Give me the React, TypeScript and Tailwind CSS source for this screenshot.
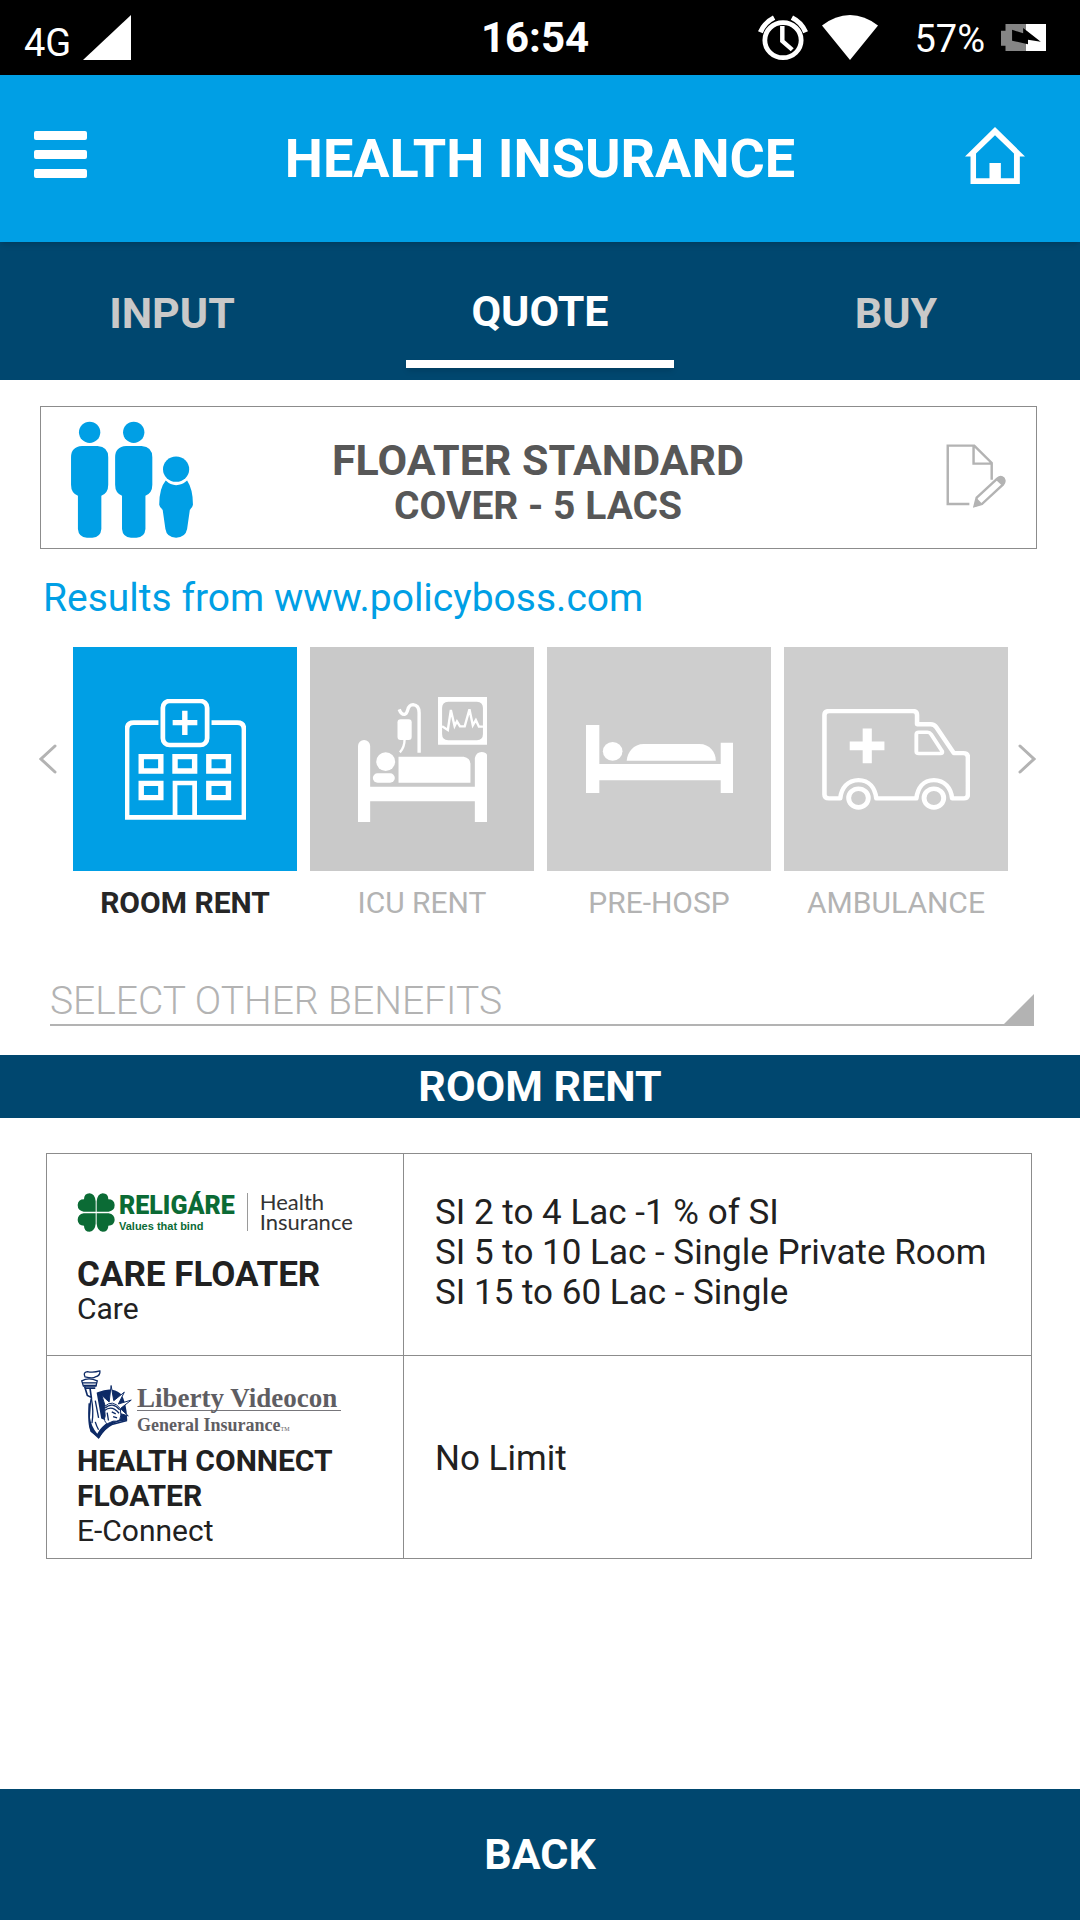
import { useState, type ReactNode } from "react";

type IconProps = { className?: string };

function Signal() {
  return (
    <svg className="h-[45px] w-12" viewBox="0 0 48 45" preserveAspectRatio="none" aria-hidden="true">
      <path d="M0 45L48 0V45Z" fill="#fff" />
    </svg>
  );
}

function Alarm() {
  return (
    <svg className="h-[45px] w-[50px]" viewBox="635 38 146 136" preserveAspectRatio="none" fill="none" stroke="#fff" aria-hidden="true">
      <circle cx="708" cy="114" r="53" strokeWidth="14" />
      <path d="M642 90Q654 60 682 46M774 90Q762 60 734 46" strokeWidth="15" />
      <path d="M706 71V117L735 143" strokeWidth="13" />
    </svg>
  );
}

function Wifi() {
  return (
    <svg className="h-[45px] w-14" viewBox="821 38 164 136" preserveAspectRatio="none" aria-hidden="true">
      <path d="M903 174L821 70Q860 38 903 38Q946 38 985 70Z" fill="#fff" />
    </svg>
  );
}

function Battery() {
  return (
    <svg className="h-[27px] w-[45px]" viewBox="1339 66 130 81" preserveAspectRatio="none" aria-hidden="true">
      <path d="M1352 66H1411V147H1352V131H1339V86H1352Z" fill="#858585" />
      <path d="M1411 66H1469V147H1411Z" fill="#fff" />
      <path d="M1371 83L1403 94V78L1454 119L1417 113V127L1371 116Z" fill="#000" />
    </svg>
  );
}

function Home() {
  return (
    <svg className="h-[57px] w-[60px]" viewBox="1234 380 174 172" preserveAspectRatio="none" aria-hidden="true">
      <path
        fill="#fff"
        fillRule="evenodd"
        d="M1321 380L1408 469H1393V552H1250V469H1234ZM1321 405L1266 460V535H1305V489H1338V535H1376V460Z"
      />
    </svg>
  );
}

function Person() {
  return (
    <g>
      <ellipse cx="260" cy="547" rx="31" ry="32" />
      <path d="M238 588H283Q314 590 314 622V705Q314 730 294 738V838Q292 863 268 864H252Q228 863 226 838V738Q206 730 206 705V622Q206 590 238 588Z" />
    </g>
  );
}

function Family() {
  return (
    <svg className="h-[117px] w-[124px]" viewBox="203 513 360 352" preserveAspectRatio="none" fill="#009fe5" aria-hidden="true">
      <Person />
      <g transform="translate(128 0)">
        <Person />
      </g>
      <ellipse cx="511" cy="658" rx="38" ry="38" />
      <path d="M481 692Q495 706 511 706Q528 706 543 692Q560 718 560 765Q559 773 551 780L543 838Q538 864 511 864Q484 864 480 838L472 780Q463 773 462 765Q462 715 481 692Z" />
    </svg>
  );
}

function EditPage() {
  return (
    <svg className="h-16 w-[60px]" viewBox="1183 583 172 192" preserveAspectRatio="none" fill="none" stroke="#b3b3b3" strokeWidth="7" aria-hidden="true">
      <path d="M1250 763H1188V588H1264L1314 640V690M1262 588V642H1314" />
      <path d="M1265 769L1271 744L1330 687Q1340 678 1348 686Q1354 695 1346 705L1286 763Z" />
      <path d="M1324 689Q1340 676 1349 684Q1358 695 1345 709ZM1262 773L1270 744L1288 764Z" fill="#b3b3b3" stroke="none" />
    </svg>
  );
}

function Chevron({ className }: IconProps) {
  return (
    <svg className={className} viewBox="0 0 18 30" fill="none" stroke="#b3b3b3" strokeWidth="3" strokeLinecap="round" aria-hidden="true">
      <path d="M16 2L2 15L16 28" />
    </svg>
  );
}

function Hospital() {
  return (
    <svg className="h-[121px] w-[121px]" viewBox="311 207 358 363" preserveAspectRatio="none" fill="none" stroke="#fff" aria-hidden="true">
      <path d="M410 278H337Q317 278 317 298V562H663V298Q663 278 643 278H567" strokeWidth="14" />
      <rect x="423" y="213" width="131" height="132" rx="20" strokeWidth="14" />
      <path d="M488 242V315M452 278H525" strokeWidth="16" />
      <path
        d="M359 380H417V423H359ZM459 380H517V423H459ZM559 380H617V423H559ZM359 460H417V503H359ZM559 460H617V503H559Z"
        strokeWidth="16"
      />
      <path d="M459 557V459H517V557" strokeWidth="14" />
    </svg>
  );
}

function IcuBed() {
  return (
    <svg className="h-[125px] w-[129px]" viewBox="1000 201 382 375" preserveAspectRatio="none" fill="#fff" aria-hidden="true">
      <path d="M1000 576V348a18 18 0 0 1 36 0V470H1346V384q4-18 20-18q12 0 16 8V576H1346V514H1036V576Z" />
      <circle cx="1082" cy="395" r="28" />
      <rect x="1044" y="430" width="65" height="28" rx="14" />
      <path d="M1120 380H1313Q1333 384 1333 402V458H1120Z" />
      <rect x="1117" y="268" width="42" height="62" rx="9" />
      <path fillRule="evenodd" d="M1237 201H1382V344H1237ZM1267 215Q1249 216 1249 234V312Q1249 330 1267 331H1352Q1370 330 1370 312V234Q1370 216 1352 215Z" />
      <g fill="none" stroke="#fff">
        <path d="M1138 328Q1138 352 1124 367" strokeWidth="7" />
        <path d="M1122 238Q1128 254 1138 253C1152 250 1142 224 1163 224Q1181 226 1181 248V368" strokeWidth="10" />
        <path d="M1249 289L1266 300L1275 240L1286 288L1293 274L1302 289H1316L1330 238L1340 286L1349 270L1358 290H1370" strokeWidth="7" />
      </g>
    </svg>
  );
}

function Bed() {
  return (
    <svg className="h-[68px] w-[147px]" viewBox="157 288 419 204" preserveAspectRatio="none" fill="#fff" aria-hidden="true">
      <path d="M157 288H195V405H541V341H576V492H541V454H195V492H157Z" />
      <circle cx="233" cy="367" r="28" />
      <path d="M273 395C275 370 292 345 322 345H480C510 345 527 370 527 395Z" />
    </svg>
  );
}

function Ambulance() {
  return (
    <svg className="h-[101px] w-[148px]" viewBox="830 237 422 304" preserveAspectRatio="none" fill="none" stroke="#fff" strokeWidth="13" strokeLinejoin="round" aria-hidden="true">
      <path d="M882 506H850Q837 506 837 494V255Q837 243 850 243H1090Q1101 243 1101 255V283H1140Q1150 283 1156 292L1206 370H1233Q1246 370 1246 382V494Q1246 506 1235 506H1201C1198 475 1180 451 1149 451C1118 451 1103 475 1099 506H985C981 475 965 451 934 451C903 451 885 475 882 506Z" />
      <path d="M1106 307H1131Q1137 307 1141 313L1173 365Q1174 371 1168 371H1106Q1099 371 1099 365V313Q1099 307 1106 307Z" strokeWidth="11" />
      <circle cx="934" cy="505" r="28" strokeWidth="14" />
      <circle cx="1149" cy="505" r="28" strokeWidth="14" />
      <path d="M959 296V400M909 348H1008" strokeWidth="26" />
    </svg>
  );
}

const leaf = "M201 213H165Q147 210 147 193Q148 176 166 176Q166 158 183 158Q199 160 201 182Z";

function Clover() {
  return (
    <svg className="h-[39px] w-[38px]" viewBox="145 157 114 117" fill="#0b6b35" aria-hidden="true">
      <path d={leaf} />
      <path d={leaf} transform="translate(405 0) scale(-1 1)" />
      <path d={leaf} transform="translate(0 431) scale(1 -1)" />
      <path d={leaf} transform="translate(405 431) scale(-1 -1)" />
    </svg>
  );
}

function ReligareLogo() {
  return (
    <div className="flex h-10 items-center">
      <Clover />
      <div className="ml-1 text-[#0b6b35]">
        <div className="text-[25px] leading-7 font-black">RELIGÁRE</div>
        <div className="font-['Liberation_Sans',sans-serif] text-[11px] leading-3 font-bold">Values that bind</div>
      </div>
      <div className="mx-3 h-[38px] w-px bg-[#9a9a9a]" />
      <div className="font-['Lato',sans-serif] text-[22px] leading-5 text-[#333]">
        Health
        <br />
        Insurance
      </div>
    </div>
  );
}

function Statue() {
  return (
    <svg className="h-[70px] w-[53px] shrink-0" viewBox="150 72 160 212" aria-hidden="true">
      <path d="M205 142Q245 124 272 146Q291 168 293 228Q262 230 240 243Q222 257 208 281L182 262Q174 232 178 180L184 150Z" fill="#0d2a66" />
      <path d="M160 128Q168 150 184 164L180 220Q184 248 202 268Q212 248 236 232L214 222L198 132Z" fill="#fff" />
      <path d="M184 160Q192 200 186 236M196 168L206 220M196 232Q200 246 206 256" fill="none" stroke="#0d2a66" strokeWidth="4" />
      <path d="M178 176Q174 240 184 260L206 280Q222 252 246 240L292 228" fill="none" stroke="#0d2a66" strokeWidth="5" />
      <path d="M165 96Q158 82 172 80Q190 84 210 78Q212 92 196 96Q190 102 165 96Z" fill="#fff" stroke="#0d2a66" strokeWidth="4" />
      <path d="M155 108Q176 96 202 108L198 124H160Z" fill="#fff" stroke="#0d2a66" strokeWidth="4" />
      <path d="M160 122H200M166 130H196M164 126L172 152L184 158L180 130" fill="none" stroke="#0d2a66" strokeWidth="5" />
      <path d="M157 114H200" stroke="#0d2a66" strokeWidth="4" />
      <g fill="#fff" stroke="#0d2a66" strokeWidth="3" strokeLinejoin="round">
        <path d="M226 184L216 152L238 172L244 122L252 168L284 142L266 178L305 166L272 192L296 214L268 206Z" />
        <path d="M224 186Q248 162 272 192Q276 214 270 226Q262 232 250 230L232 238Q220 230 226 214Z" />
      </g>
      <path d="M226 190Q248 170 270 196M224 198Q246 180 268 206M246 202L258 208M250 216L262 220M232 204L236 228" fill="none" stroke="#0d2a66" strokeWidth="4" />
    </svg>
  );
}

function LibertyLogo() {
  return (
    <div className="flex items-end pl-[3px] font-['Liberation_Serif',serif] font-bold text-[#5f5e63]">
      <Statue />
      <div className="pl-1">
        <div className="border-b border-[#77767b] pr-1 text-[27px] leading-6">Liberty Videocon</div>
        <div className="pt-1 text-[18px] leading-5">
          General Insurance<span className="text-[6px] font-normal">TM</span>
        </div>
      </div>
    </div>
  );
}

const tabs = ["INPUT", "QUOTE", "BUY"];

const benefits: { label: string; icon: ReactNode; tone: string }[] = [
  { label: "ROOM RENT", icon: <Hospital />, tone: "bg-[#c9c9c9]" },
  { label: "ICU RENT", icon: <IcuBed />, tone: "bg-[#c9c9c9]" },
  { label: "PRE-HOSP", icon: <Bed />, tone: "bg-[#cecece]" },
  { label: "AMBULANCE", icon: <Ambulance />, tone: "bg-[#cecece]" },
];

export default function App() {
  const [tab, setTab] = useState("QUOTE");
  const [benefit, setBenefit] = useState("ROOM RENT");

  return (
    <div className="flex min-h-screen flex-col bg-white font-['Roboto',sans-serif] text-[#212121]">
      <div className="grid h-[75px] grid-cols-[1fr_auto_1fr] items-center bg-black pr-[34px] pl-6 text-[38px] text-white">
        <div className="flex items-center gap-3">
          <span className="pt-3">4G</span>
          <Signal />
        </div>
        <span className="text-[42px] font-bold">16:54</span>
        <div className="flex items-center justify-end">
          <Alarm />
          <span className="ml-3.5">
            <Wifi />
          </span>
          <span className="mr-4 ml-9 pt-1">57%</span>
          <Battery />
        </div>
      </div>

      <header className="z-10 grid h-[167px] grid-cols-[1fr_auto_1fr] items-center bg-[#009fe5] px-[34px] text-white shadow-md">
        <button type="button" aria-label="Menu" className="flex w-[60px] flex-col gap-2.5 pb-2">
          <span className="h-[9px] w-[53px] rounded-xs bg-white" />
          <span className="h-[9px] w-[53px] rounded-xs bg-white" />
          <span className="h-[9px] w-[53px] rounded-xs bg-white" />
        </button>
        <h1 className="text-[54px] font-bold">HEALTH INSURANCE</h1>
        <button type="button" aria-label="Home" className="mr-[21px] justify-self-end pb-1.5">
          <Home />
        </button>
      </header>

      <nav className="grid h-[138px] grid-cols-[344fr_392fr_320fr] bg-[#00476f] pr-6">
        {tabs.map((name) => (
          <button
            key={name}
            type="button"
            onClick={() => setTab(name)}
            className={
              name === tab
                ? "relative text-[43px] font-bold text-white"
                : "relative pt-1 text-[43px] font-bold text-[#c9c9c9]"
            }
          >
            {name}
            {name === tab && <span className="absolute inset-x-[62px] bottom-3 h-2 bg-white shadow-md" />}
          </button>
        ))}
      </nav>

      <main className="flex flex-col">
        <section className="mt-[26px] mr-[43px] ml-10 flex h-[143px] items-center justify-between border border-[#8c8c8c] pr-[30px] pl-[29px]">
          <div className="pt-1">
            <Family />
          </div>
          <div className="pt-2 text-center font-bold text-[#575757]">
            <h2 className="text-[43px] leading-12">FLOATER STANDARD</h2>
            <p className="text-[39px] leading-11">COVER - 5 LACS</p>
          </div>
          <button type="button" aria-label="Edit cover" className="flex w-[124px] justify-end pb-1">
            <EditPage />
          </button>
        </section>

        <p className="px-[43px] text-[39px] leading-[98px] text-[#009fe5]">Results from www.policyboss.com</p>

        <section className="flex items-center pr-11 pl-[39px]">
          <button type="button" aria-label="Previous benefits" className="mb-13 w-[34px]">
            <Chevron className="h-[30px] w-[18px]" />
          </button>
          <div className="grid flex-1 grid-cols-4 gap-[13px]">
            {benefits.map(({ label, icon, tone }) => (
              <button key={label} type="button" onClick={() => setBenefit(label)} className="flex flex-col items-center gap-3">
                <span
                  className={`flex aspect-square w-full items-center justify-center ${label === benefit ? "bg-[#009fe5]" : tone}`}
                >
                  {icon}
                </span>
                <span
                  className={
                    label === benefit
                      ? "text-[30px] leading-10 font-bold text-[#262626]"
                      : "text-[30px] leading-10 text-[#b3b3b3]"
                  }
                >
                  {label}
                </span>
              </button>
            ))}
          </div>
          <button type="button" aria-label="More benefits" className="mb-13 flex w-7 justify-end">
            <Chevron className="h-[30px] w-[18px] rotate-180" />
          </button>
        </section>

        <div className="relative mt-[51px] mr-[46px] ml-[50px]">
          <select
            aria-label="Select other benefits"
            className="h-13 w-full appearance-none border-b-2 border-[#b3b3b3] bg-transparent pt-1 text-[39px] leading-[46px] font-light text-[#b3b3b3] outline-none"
          >
            <option>SELECT OTHER BENEFITS</option>
          </select>
          <svg className="pointer-events-none absolute right-0 bottom-0 size-8" viewBox="0 0 32 32" aria-hidden="true">
            <path d="M0 32L32 0V32Z" fill="#b3b3b3" />
          </svg>
        </div>

        <h2 className="mt-[29px] bg-[#00476f] text-center text-[43px] leading-[63px] font-bold text-white">{benefit}</h2>

        <div className="mt-[35px] mr-12 ml-[46px]">
          <table className="w-full table-fixed border-collapse text-left">
            <colgroup>
              <col className="w-[357px]" />
              <col />
            </colgroup>
            <tbody>
              <tr className="h-[202px]">
                <th scope="row" className="border border-[#8c8c8c] pt-[38px] pl-[30px] align-top font-normal">
                  <ReligareLogo />
                  <div className="mt-[25px] text-[35px] leading-9 font-bold">CARE FLOATER</div>
                  <div className="text-[30px] leading-8">Care</div>
                </th>
                <td className="border border-[#8c8c8c] px-[31px] pb-1 text-[35px] leading-10">
                  SI 2 to 4 Lac -1 % of SI
                  <br />
                  SI 5 to 10 Lac - Single Private Room
                  <br />
                  SI 15 to 60 Lac - Single
                </td>
              </tr>
              <tr className="h-[203px]">
                <th scope="row" className="border border-[#8c8c8c] pt-[13px] pl-[30px] align-top font-normal">
                  <LibertyLogo />
                  <div className="mt-1 text-[30px] leading-[35px] font-bold">
                    HEALTH CONNECT
                    <br />
                    FLOATER
                  </div>
                  <div className="text-[30px] leading-[35px]">E-Connect</div>
                </th>
                <td className="border border-[#8c8c8c] px-[31px] pt-1 text-[35px] leading-10">No Limit</td>
              </tr>
            </tbody>
          </table>
        </div>
      </main>

      <button type="button" className="mt-auto h-[131px] w-full bg-[#00476f] text-[43px] font-bold text-white">
        BACK
      </button>
    </div>
  );
}
